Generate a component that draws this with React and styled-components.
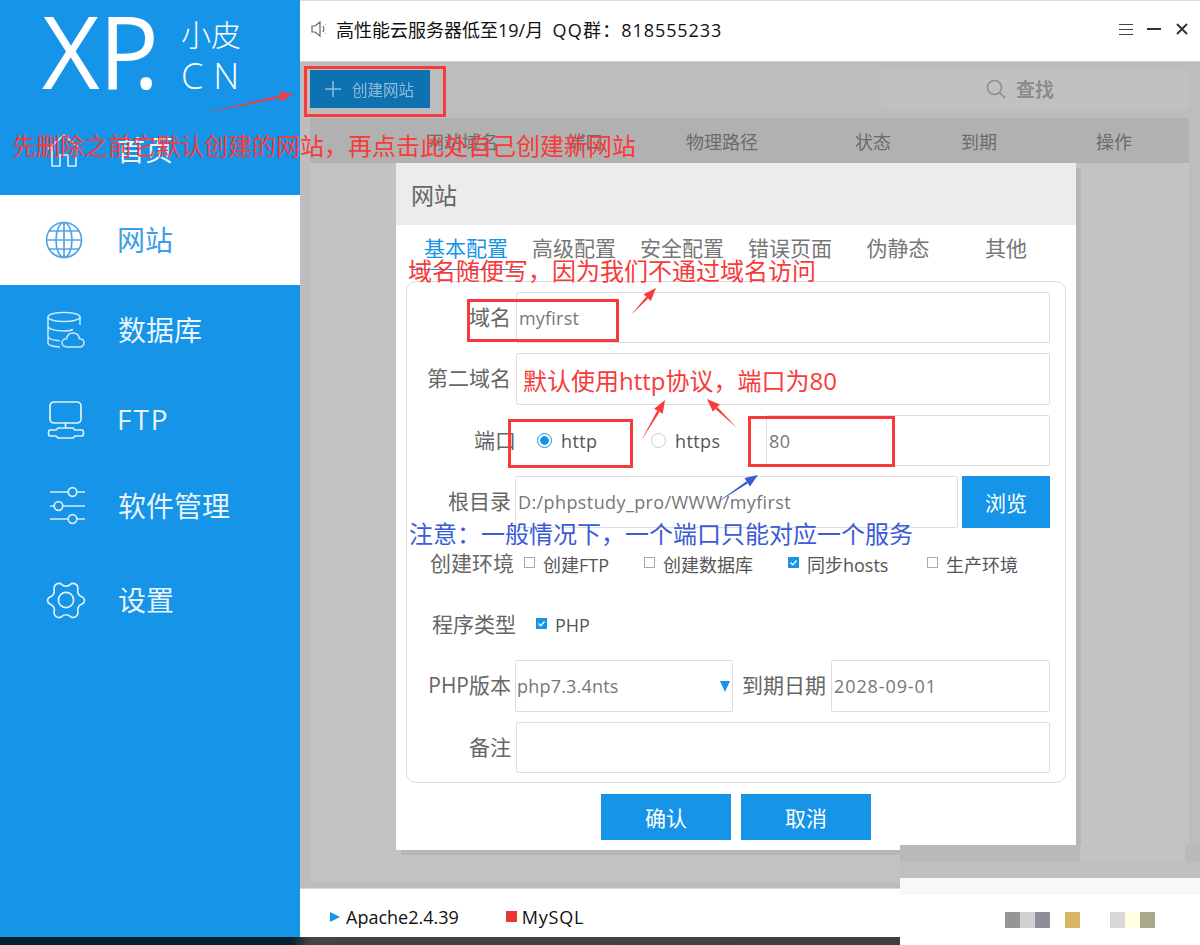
import React from 'react';
import styled, { createGlobalStyle } from 'styled-components';

const blue = '#1594e8';
const sans = '"Open Sans", "Noto Sans CJK SC", sans-serif';

const GlobalStyle = createGlobalStyle`
  html, body { margin: 0; padding: 0; background: #fff; }
  body { font-family: ${sans}; }
  * { box-sizing: border-box; }
`;

const Page = styled.div`
  position: relative;
  width: 1200px;
  height: 945px;
  overflow: hidden;
  display: flex;
  flex-direction: column;
`;

const Body = styled.div`
  display: flex;
  height: 937px;
`;

const TaskStrip = styled.div`
  height: 8px;
  background: linear-gradient(90deg, #02202f 0, #02202f 290px, #444 310px, #3e3e3e 100%);
`;

/* sidebar */
const Sidebar = styled.aside`
  width: 300px;
  background: ${blue};
  display: flex;
  flex-direction: column;
`;

const Logo = styled.div`
  height: 105px;
  padding: 0 0 0 42px;
  display: flex;
  color: #fff;
`;

const LogoMark = styled.div`
  font-size: 100px;
  line-height: 100px;
  width: 139px;
  font-weight: 500;
  letter-spacing: -1px;
  white-space: nowrap;
`;

const LogoDot = styled.span`
  margin-left: -25px;
`;

const LogoSide = styled.div`
  display: flex;
  flex-direction: column;
  padding-top: 15px;
`;

const LogoCn = styled.div`
  font-size: 30px;
  line-height: 40px;
  font-weight: 300;
  width: 62px;
`;

const LogoEn = styled.div`
  font-size: 36px;
  line-height: 42px;
  letter-spacing: 10px;
  font-weight: 300;
  white-space: nowrap;
`;

const NavItem = styled.div`
  height: 90px;
  display: flex;
  align-items: center;
  padding: 0 0 ${p => p.$lift || 0}px 46px;
  gap: 31px;
  font-size: 28px;
  background: ${p => (p.$active ? '#fff' : 'transparent')};
  color: ${p => (p.$active ? '#3d9fe6' : 'rgba(255,255,255,.92)')};
  svg { flex: none; width: 40px; height: 40px; }
`;

const NavText = styled.span`
  letter-spacing: ${p => p.$spaced || 0}px;
  margin: -2px 0 0 ${p => p.$shift || 0}px;
`;

/* main column */
const Main = styled.main`
  flex: 1;
  display: flex;
  flex-direction: column;
  min-width: 0;
`;

const TopBar = styled.header`
  height: 62px;
  flex: none;
  display: flex;
  align-items: center;
  padding: 0 12px 4px 11px;
  border-top: 1px solid #ddd;
  border-bottom: 1px solid #d0d0d0;
  background: #fff;
`;

const Notice = styled.div`
  margin: -1px 0 0 9px;
  font-size: 18px;
  color: #111;
  white-space: pre;
  flex: 1;
`;

const QqGroup = styled.span`
  letter-spacing: ${p => p.$ls}px;
`;

const WinIcons = styled.div`
  display: flex;
  align-items: center;
  gap: 14px;
`;

const Content = styled.div`
  flex: 1;
  background: #bdbdbd;
  padding: 8px 11px 6px 10px;
  display: flex;
  flex-direction: column;
  border-bottom: 1px solid #d8d8d8;
`;

const Toolbar = styled.div`
  display: flex;
  justify-content: space-between;
  height: 38px;
  margin-bottom: 10px;
  flex: none;
`;

const CreateBtn = styled.div`
  width: 120px;
  background: #0f72b0;
  color: #8dbcdb;
  display: flex;
  align-items: center;
  gap: 11px;
  padding-left: 15px;
  font-size: 15.5px;
  span { filter: blur(.5px); }
`;

const SearchBox = styled.div`
  width: 308px;
  background: #c1c1c1;
  display: flex;
  align-items: center;
  justify-content: center;
  gap: 10px;
  padding-right: 30px;
  color: #8c8c8c;
  font-size: 19px;
  font-weight: 600;
  span { filter: blur(.5px); }
`;

const TableHead = styled.div`
  height: 45px;
  flex: none;
  background: #b1b1b1;
  color: #6b6b6b;
  font-size: 18px;
  display: grid;
  grid-template-columns: 116px 141px 119px 169px 106px 135px 1fr;
  align-items: center;
`;

const TableBody = styled.div`
  flex: 1;
  background: #c3c3c3;
`;

const StatusBar = styled.footer`
  height: 48px;
  flex: none;
  background: #fff;
  display: flex;
  align-items: center;
  padding: 7px 0 0 30px;
  font-size: 18px;
  color: #111;
`;

const PlayMark = styled.i`
  width: 0;
  height: 0;
  border-left: 10px solid ${blue};
  border-top: 5px solid transparent;
  border-bottom: 5px solid transparent;
  margin-right: 6px;
`;

const StopMark = styled.i`
  width: 11px;
  height: 11px;
  background: #e83535;
  margin: 0 5px 0 47px;
`;

const StatusName = styled.span`
  letter-spacing: ${p => p.$ls || 0}px;
`;

/* dialog */
const Dialog = styled.section`
  position: absolute;
  left: 396px;
  top: 163px;
  width: 680px;
  height: 687px;
  background: #fff;
  box-shadow: 5px 5px 0 #b6b6b6;
  display: flex;
  flex-direction: column;
`;

const DialogTitle = styled.div`
  height: 62px;
  background: #ececec;
  padding-left: 15px;
  display: flex;
  align-items: center;
  font-size: 23px;
  color: #666;
`;

const Tabs = styled.div`
  height: 56px;
  padding-left: 16px;
  display: flex;
`;

const Tab = styled.div`
  width: 108px;
  height: 45px;
  padding-top: 7px;
  text-align: center;
  font-size: 21px;
  line-height: 32px;
  color: ${p => (p.$active ? blue : '#777')};
  border-bottom: 1px solid ${p => (p.$active ? blue : 'transparent')};
`;

const Panel = styled.div`
  margin: 0 10px;
  height: 502px;
  border: 1px solid #ddd;
  border-radius: 10px;
  padding: 10px 15px 0 0;
  display: flex;
  flex-direction: column;
`;

const Row = styled.div`
  display: flex;
  align-items: center;
  height: ${p => p.$h || 52}px;
  margin-bottom: ${p => p.$gap ?? 10}px;
  flex: none;
`;

const Label = styled.label`
  width: ${p => p.$w || 104}px;
  flex: none;
  text-align: right;
  font-size: 21px;
  line-height: 28px;
  padding-bottom: 2px;
  color: #666;
  white-space: nowrap;
  margin-right: ${p => p.$mr ?? 5}px;
`;

const Field = styled.div`
  flex: ${p => (p.$w ? 'none' : 1)};
  width: ${p => (p.$w ? `${p.$w}px` : 'auto')};
  height: 100%;
  border: 1px solid #ddd;
  border-radius: 2px;
  padding-left: ${p => p.$pad ?? 2}px;
  display: flex;
  align-items: center;
  justify-content: space-between;
  font-size: 18px;
  color: #777;
  letter-spacing: ${p => p.$ls ?? 0.4}px;
  white-space: nowrap;
`;

const RadioItem = styled.div`
  display: flex;
  align-items: center;
  gap: 9px;
  width: ${p => p.$w}px;
  flex: none;
  font-size: 18px;
  letter-spacing: .4px;
  color: #555;
`;

const RadioDot = styled.i`
  width: 15px;
  height: 15px;
  border-radius: 50%;
  border: 1px solid ${p => (p.$on ? blue : '#ccc')};
  background: ${p => (p.$on ? `radial-gradient(circle, ${blue} 0, ${blue} 4px, #fff 4.6px)` : '#fff')};
`;

const CheckItem = styled.div`
  display: flex;
  align-items: center;
  gap: 8px;
  width: ${p => p.$w}px;
  flex: none;
  font-size: 18px;
  color: #555;
  white-space: nowrap;
`;

const CheckBox = styled.i`
  width: 11px;
  height: 11px;
  margin-top: -4px;
  border: 1px solid ${p => (p.$on ? blue : '#aaa')};
  background: ${p => (p.$on ? blue : '#fff')};
  display: flex;
  align-items: center;
  justify-content: center;
`;

const BrowseBtn = styled.div`
  width: 88px;
  height: 100%;
  margin-left: 4px;
  flex: none;
  background: ${blue};
  color: #fff;
  font-size: 21px;
  display: flex;
  align-items: center;
  justify-content: center;
`;

const Caret = styled.i`
  width: 0;
  height: 0;
  margin-right: 2px;
  border-top: 11px solid ${blue};
  border-left: 5.5px solid transparent;
  border-right: 5.5px solid transparent;
`;

const Actions = styled.div`
  display: flex;
  justify-content: center;
  gap: 10px;
  margin-top: 11px;
`;

const ActionBtn = styled.div`
  width: 130px;
  height: 46px;
  background: ${blue};
  color: #fff;
  font-size: 21px;
  display: flex;
  align-items: center;
  justify-content: center;
`;

/* hand drawn notes over the shot */
const Note = styled.div`
  position: absolute;
  left: ${p => p.$x}px;
  top: ${p => p.$y}px;
  font-size: 24px;
  line-height: 32px;
  color: ${p => p.$color || '#f93a3a'};
  white-space: nowrap;
`;

const NoteBox = styled.div`
  position: absolute;
  left: ${p => p.$x}px;
  top: ${p => p.$y}px;
  width: ${p => p.$w}px;
  height: ${p => p.$h}px;
  border: 3px solid #f93a3a;
`;

const ArrowLayer = styled.svg`
  position: absolute;
  left: 0;
  top: 0;
  width: 1200px;
  height: 945px;
  pointer-events: none;
`;

/* pixelated corner */
const Mosaic = styled.div`
  position: absolute;
  left: 900px;
  top: 845px;
  width: 300px;
  height: 100px;
  display: flex;
  flex-direction: column;
`;

const MosaicTop = styled.div`
  height: 17px;
  background: linear-gradient(90deg, #b9b9b9 0, #b9b9b9 180px, #c3c3c3 180px, #c3c3c3 285px, #bababa 285px);
`;

const MosaicMid = styled.div`
  height: 16px;
  background: #bfbfbf;
`;

const MosaicFade = styled.div`
  height: 17px;
  background: #f8f8f8;
`;

const MosaicBottom = styled.div`
  flex: 1;
  background: #fff;
  padding: 17px 0 0 105px;
  display: flex;
  align-items: flex-start;
`;

const Swatch = styled.i`
  width: 15px;
  height: 16px;
  background: ${p => p.$c || 'transparent'};
`;

const HomeIcon = () => (
  <svg viewBox="2 0 40 40" fill="none" stroke="#fff" strokeWidth="1.6" opacity=".85">
    <path d="M4 19 20 5l16 14M8 17v19h8V25h8v11h8V17" />
  </svg>
);

const GlobeIcon = () => (
  <svg viewBox="2 0 40 40" fill="none" stroke="#4ea6e8" strokeWidth="1.7">
    <circle cx="20" cy="20" r="17.5" />
    <ellipse cx="20" cy="20" rx="8" ry="17.5" />
    <path d="M20 2.500v35M2.500 20h35M5 11h30M5 29h30" />
  </svg>
);

const DbIcon = () => (
  <svg viewBox="0 0 40 40" fill="none" stroke="#cfe8fa" strokeWidth="1.5">
    <ellipse cx="18" cy="7" rx="16" ry="4.500" />
    <path d="M2 7v26c0 2 4 3.500 12 4M34 7v8M2 16c0 3 7 5 16 5 4 0 7-.5 9-1.500M2 26c0 2.500 5 4.300 12 4.800" />
    <path d="M21 37c-3 0-5-2-5-4.200 0-2.300 2-4 4.500-4 .7-3.500 3.500-5.800 6.500-5.800 3.500 0 6 2.500 6.500 5.800 3 0 4.500 1.800 4.500 4 0 2.500-2 4.200-4.500 4.200z" />
  </svg>
);

const FtpIcon = () => (
  <svg viewBox="0 0 40 40" fill="none" stroke="#e4f2fc" strokeWidth="1.7">
    <rect x="4" y="2" width="31" height="21" rx="4" />
    <path d="M19.500 23v5M12 28h15l2 2h7c2 0 2 6 0 6h-7l-2 2H12l-2-2H4c-2 0-2-6 0-6h6z" />
  </svg>
);

const SlidersIcon = () => (
  <svg viewBox="0 0 40 40" fill="none" stroke="#d7ecfb" strokeWidth="1.7">
    <path d="M4 6h18M31 6h8M4 20h4M17 20h22M4 33h18M31 33h8" />
    <circle cx="26.500" cy="6" r="4.300" />
    <circle cx="12.500" cy="20" r="4.300" />
    <circle cx="26.500" cy="33" r="4.300" />
  </svg>
);

const GearIcon = () => (
  <svg viewBox="0 0 42 40" fill="none" stroke="#e4f2fc" strokeWidth="1.7">
    <circle cx="21" cy="20" r="8" />
    <path d="M14 2.500c3 0 2.500 3 7 3s4-3 7-3c2 0 4 1 5 3 1.500 3-1 4.500 1 8s4 2.500 5.500 4.500c1 1.500 1 3.500 0 5-1.500 2-4 1-5.500 4.500s.5 5-1 8c-1 2-3 3-5 3-3 0-2.500-3-7-3s-4 3-7 3c-2 0-4-1-5-3-1.500-3 1-4.500-1-8s-4-2.500-5.500-4.500c-1-1.500-1-3.500 0-5 1.500-2 4-1 5.500-4.500s-.5-5 1-8c1-2 3-3 5-3z" />
  </svg>
);

const nav = [
  { label: '首页', icon: <HomeIcon /> },
  { label: '网站', icon: <GlobeIcon />, active: true },
  { label: '数据库', icon: <DbIcon />, shift: 1 },
  { label: 'FTP', icon: <FtpIcon />, spaced: 2 },
  { label: '软件管理', icon: <SlidersIcon />, shift: 1, lift: 8 },
  { label: '设置', icon: <GearIcon />, shift: 1 },
];

const Speaker = () => (
  <svg width="16" height="18" viewBox="0 0 16 18" fill="none" stroke="#666" strokeWidth="1.200">
    <path d="M1 6h3l5-4v14l-5-4H1zM12 6c1 1.500 1 4.500 0 6M14.500 4v.5M14.500 13.500v.5" />
  </svg>
);

const WindowControls = () => (
  <WinIcons>
    <svg width="14" height="13" viewBox="0 0 14 13" stroke="#444" strokeWidth="1">
      <path d="M0 1.500h14M0 6.500h14M0 11.500h14" />
    </svg>
    <svg width="14" height="4" viewBox="0 0 14 4" stroke="#333" strokeWidth="2">
      <path d="M0 2h14" />
    </svg>
    <svg width="12" height="12" viewBox="0 0 12 12" stroke="#333" strokeWidth="2" style={{ marginLeft: 1 }}>
      <path d="M1 1l10 10M11 1 1 11" />
    </svg>
  </WinIcons>
);

const Tick = () => (
  <svg width="9" height="9" viewBox="0 0 9 9" fill="none" stroke="#fff" strokeWidth="1.300">
    <path d="M1.500 4.500 3.800 6.800 7.500 2.500" />
  </svg>
);

const Arrow = ({ from, to, color = '#f93a3a' }) => {
  const [x1, y1] = from;
  const [x2, y2] = to;
  const len = Math.hypot(x2 - x1, y2 - y1);
  const ux = (x2 - x1) / len;
  const uy = (y2 - y1) / len;
  const bx = x2 - ux * 13;
  const by = y2 - uy * 13;
  return (
    <g fill={color}>
      <polygon points={`${x1},${y1} ${bx - uy * 1.300},${by + ux * 1.300} ${bx + uy * 1.300},${by - ux * 1.300}`} />
      <polygon points={`${x2},${y2} ${bx - uy * 5},${by + ux * 5} ${bx + uy * 5},${by - ux * 5}`} />
    </g>
  );
};

const tabs = ['基本配置', '高级配置', '安全配置', '错误页面', '伪静态', '其他'];

export default function App() {
  return (
    <Page>
      <GlobalStyle />
      <Body>
        <Sidebar>
          <Logo>
            <LogoMark>XP<LogoDot>.</LogoDot></LogoMark>
            <LogoSide>
              <LogoCn>小皮</LogoCn>
              <LogoEn>CN</LogoEn>
            </LogoSide>
          </Logo>
          {nav.map(item => (
            <NavItem key={item.label} $active={item.active} $lift={item.lift}>
              {item.icon}
              <NavText $spaced={item.spaced} $shift={item.shift}>{item.label}</NavText>
            </NavItem>
          ))}
        </Sidebar>
        <Main>
          <TopBar>
            <Speaker />
            <Notice>高性能云服务器低至19/月  <QqGroup $ls={1.2}>QQ群&#xFF1A;</QqGroup><QqGroup $ls={0.9}>818555233</QqGroup></Notice>
            <WindowControls />
          </TopBar>
          <Content>
            <Toolbar>
              <CreateBtn>
                <svg width="16" height="16" viewBox="0 0 16 16" stroke="#8dbcdb" strokeWidth="1.500">
                  <path d="M8 0v16M0 8h16" />
                </svg>
                <span>创建网站</span>
              </CreateBtn>
              <SearchBox>
                <svg width="20" height="20" viewBox="0 0 20 20" fill="none" stroke="#8c8c8c" strokeWidth="1.600">
                  <circle cx="8.500" cy="8.500" r="7" />
                  <path d="M13.500 13.500 19 19" />
                </svg>
                <span>查找</span>
              </SearchBox>
            </Toolbar>
            <TableHead>
              <span />
              <span>网站域名</span>
              <span>端口</span>
              <span>物理路径</span>
              <span>状态</span>
              <span>到期</span>
              <span>操作</span>
            </TableHead>
            <TableBody />
          </Content>
          <StatusBar>
            <PlayMark />
            <StatusName>Apache2.4.39</StatusName>
            <StopMark />
            <StatusName $ls={0.8}>MySQL</StatusName>
          </StatusBar>
        </Main>
      </Body>
      <TaskStrip />

      <Dialog>
        <DialogTitle>网站</DialogTitle>
        <Tabs>
          {tabs.map((t, i) => (
            <Tab key={t} $active={i === 0}>{t}</Tab>
          ))}
        </Tabs>
        <Panel>
          <Row $h={51}>
            <Label>域名</Label>
            <Field $ls={0.2}>myfirst</Field>
          </Row>
          <Row>
            <Label>第二域名</Label>
            <Field />
          </Row>
          <Row $h={51}>
            <Label $w={109} $mr={21}>端口</Label>
            <RadioItem $w={114}><RadioDot $on />http</RadioItem>
            <RadioItem $w={115}><RadioDot />https</RadioItem>
            <Field>80</Field>
          </Row>
          <Row $gap={11}>
            <Label $mr={4}>根目录</Label>
            <Field>D:/phpstudy_pro/WWW/myfirst</Field>
            <BrowseBtn>浏览</BrowseBtn>
          </Row>
          <Row $h={50} $gap={11}>
            <Label $w={107} $mr={10}>创建环境</Label>
            <CheckItem $w={120}><CheckBox />创建FTP</CheckItem>
            <CheckItem $w={144}><CheckBox />创建数据库</CheckItem>
            <CheckItem $w={139}><CheckBox $on><Tick /></CheckBox>同步hosts</CheckItem>
            <CheckItem $w={100}><CheckBox />生产环境</CheckItem>
          </Row>
          <Row $h={50}>
            <Label $w={109} $mr={20}>程序类型</Label>
            <CheckItem $w={100}><CheckBox $on><Tick /></CheckBox>PHP</CheckItem>
          </Row>
          <Row>
            <Label $mr={4}>PHP版本</Label>
            <Field $w={218} $pad={1} $ls={0.2}>php7.3.4nts<Caret /></Field>
            <Label $w={93} $mr={5}>到期日期</Label>
            <Field $ls={0.9}>2028-09-01</Field>
          </Row>
          <Row $h={51} $gap={0}>
            <Label>备注</Label>
            <Field />
          </Row>
        </Panel>
        <Actions>
          <ActionBtn>确认</ActionBtn>
          <ActionBtn>取消</ActionBtn>
        </Actions>
      </Dialog>

      <Mosaic>
        <MosaicTop />
        <MosaicMid />
        <MosaicFade />
        <MosaicBottom>
          <Swatch $c="#969696" />
          <Swatch $c="#d0d0d0" />
          <Swatch $c="#8e8e96" />
          <Swatch />
          <Swatch $c="#d8b565" />
          <Swatch />
          <Swatch />
          <Swatch $c="#d8d8d8" />
          <Swatch $c="#ffffe0" />
          <Swatch $c="#a8a88e" />
        </MosaicBottom>
      </Mosaic>

      <NoteBox $x={304} $y={66} $w={142} $h={51} />
      <NoteBox $x={467} $y={299} $w={152} $h={43} />
      <NoteBox $x={508} $y={419} $w={125} $h={49} />
      <NoteBox $x={748} $y={416} $w={147} $h={51} />

      <ArrowLayer viewBox="0 0 1200 945">
        <Arrow from={[200, 114]} to={[293, 94]} />
        <Arrow from={[631, 315]} to={[656, 288]} />
        <Arrow from={[641, 441]} to={[665, 400]} />
        <Arrow from={[737, 428]} to={[707, 399]} />
        <Arrow from={[715, 504]} to={[758, 475]} color="#3b5bd6" />
      </ArrowLayer>

      <Note $x={12} $y={130}>先删除之前它默认创建的网站&#xFF0C;再点击此处自己创建新网站</Note>
      <Note $x={408} $y={255}>域名随便写&#xFF0C;因为我们不通过域名访问</Note>
      <Note $x={523} $y={365}>默认使用http协议&#xFF0C;端口为80</Note>
      <Note $x={409} $y={518} $color="#3b5bd6">注意&#xFF1A;一般情况下&#xFF0C;一个端口只能对应一个服务</Note>
    </Page>
  );
}
